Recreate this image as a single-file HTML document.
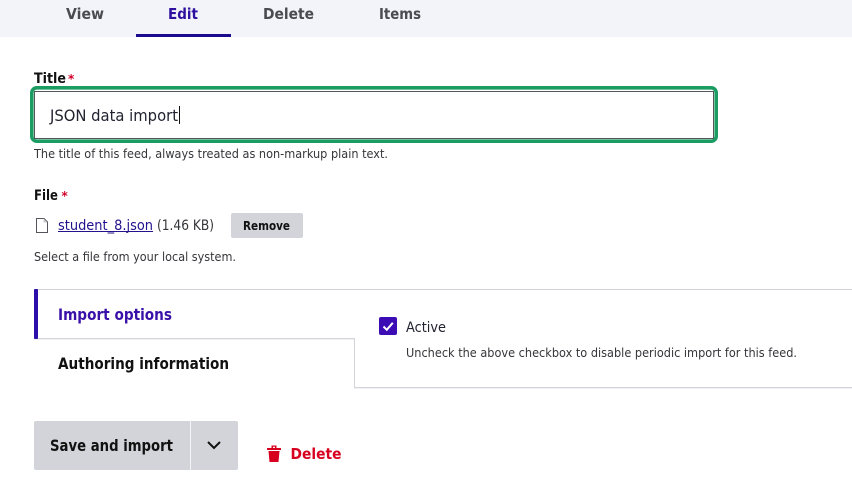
<!DOCTYPE html>
<html><head><meta charset="utf-8"><title>Edit feed</title>
<style>
html,body{margin:0;padding:0;background:#fff;width:852px;height:483px;overflow:hidden}
svg{display:block;position:absolute;left:0;top:0}
text{font-family:"DejaVu Sans","Liberation Sans",sans-serif;fill:#232429}
.b{font-weight:700}
</style></head><body>
<svg width="852" height="483" viewBox="0 0 852 483" xmlns="http://www.w3.org/2000/svg">
<rect width="852" height="37" fill="#f3f4f9"/>
<rect x="136" y="34" width="95" height="3" fill="#1b0a8e"/>
<g class="b" font-size="15.500">
<text x="66" y="19" textLength="38" lengthAdjust="spacingAndGlyphs" style="fill:#4a4b50">View</text>
<text x="168" y="19" textLength="30" lengthAdjust="spacingAndGlyphs" style="fill:#2f0fa0">Edit</text>
<text x="263" y="19" textLength="51" lengthAdjust="spacingAndGlyphs" style="fill:#4a4b50">Delete</text>
<text x="379" y="19" textLength="42" lengthAdjust="spacingAndGlyphs" style="fill:#4a4b50">Items</text>
</g>
<text class="b" x="34" y="83" font-size="14" textLength="32" lengthAdjust="spacingAndGlyphs" style="fill:#111">Title</text>
<text class="b" x="68" y="83" font-size="12" style="fill:#d0002a">*</text>
<rect x="31.800" y="87.800" width="684.400" height="53.400" rx="5" fill="#fff" stroke="#1a9c62" stroke-width="3.600"/>
<rect x="34.500" y="91.500" width="679" height="47" fill="#fff" stroke="#55565b" stroke-width="1"/>
<text x="50" y="121" font-size="16" textLength="128" lengthAdjust="spacingAndGlyphs" style="fill:#222330">JSON data import</text>
<rect x="179" y="106" width="1" height="18" fill="#111"/>
<text x="34" y="158" font-size="12.500" textLength="354" lengthAdjust="spacingAndGlyphs" style="fill:#35363a">The title of this feed, always treated as non-markup plain text.</text>
<text class="b" x="34" y="200" font-size="14" textLength="24" lengthAdjust="spacingAndGlyphs" style="fill:#111">File</text>
<text class="b" x="61.500" y="200" font-size="12" style="fill:#d0002a">*</text>
<path d="M36.500 218.500H44L47.500 222V232.500H36.500Z" fill="#fff" stroke="#55565b"/>
<path d="M43.500 218.500V222.500H47.500Z" fill="#ccc"/>
<text x="58" y="230" font-size="14.500" textLength="95" lengthAdjust="spacingAndGlyphs" style="fill:#23128c">student_8.json</text>
<rect x="58" y="231" width="95" height="1" fill="#23128c"/>
<text x="157" y="230" font-size="14.500" textLength="57" lengthAdjust="spacingAndGlyphs" style="fill:#35363a">(1.46 KB)</text>
<rect x="231" y="213" width="72" height="25" rx="2" fill="#d3d4d9"/>
<text class="b" x="243" y="230" font-size="12" textLength="47" lengthAdjust="spacingAndGlyphs" style="fill:#111">Remove</text>
<text x="34" y="261" font-size="12.500" textLength="202" lengthAdjust="spacingAndGlyphs" style="fill:#35363a">Select a file from your local system.</text>
<rect x="34" y="289" width="818" height="1" fill="#d3d4d9"/>
<rect x="34" y="338" width="321" height="1" fill="#d3d4d9"/>
<rect x="34" y="339" width="320" height="1" fill="#f1f1f4"/>
<rect x="354" y="338" width="1" height="50" fill="#d3d4d9"/>
<rect x="354" y="387" width="498" height="1" fill="#d3d4d9"/>
<rect x="354" y="388" width="498" height="1" fill="#f1f1f4"/>
<rect x="34" y="289" width="4" height="50" rx="1" fill="#2b0fa8"/>
<text class="b" x="58" y="320" font-size="16" textLength="114" lengthAdjust="spacingAndGlyphs" style="fill:#3a11a8">Import options</text>
<text class="b" x="58" y="369" font-size="16" textLength="171" lengthAdjust="spacingAndGlyphs" style="fill:#111">Authoring information</text>
<rect x="379" y="317" width="18" height="18" rx="2" fill="#3c0cb5"/>
<path d="M383.500 326.500L386.800 329.800L392.800 322.800" fill="none" stroke="#fff" stroke-width="2"/>
<text x="406" y="332" font-size="14" textLength="40" lengthAdjust="spacingAndGlyphs" style="fill:#222330">Active</text>
<text x="406" y="357" font-size="12.500" textLength="391" lengthAdjust="spacingAndGlyphs" style="fill:#35363a">Uncheck the above checkbox to disable periodic import for this feed.</text>
<rect x="34" y="421" width="204" height="49" rx="2" fill="#d3d4d9"/>
<rect x="190" y="421" width="1" height="49" fill="#f4f4f6"/>
<text class="b" x="50" y="451" font-size="16" textLength="123" lengthAdjust="spacingAndGlyphs" style="fill:#111">Save and import</text>
<path d="M208 442L214 448L220 442" fill="none" stroke="#111" stroke-width="2"/>
<path d="M267 448H281V450H267ZM271.500 448V445.500H276.500V448H275V446.800H273V448Z" fill="#d8001f"/>
<path d="M268.500 451H279.500L278.500 462H269.500Z" fill="#d8001f"/>
<text class="b" x="290.500" y="459" font-size="15.500" textLength="51" lengthAdjust="spacingAndGlyphs" style="fill:#d8001f">Delete</text>
</svg>
</body></html>
